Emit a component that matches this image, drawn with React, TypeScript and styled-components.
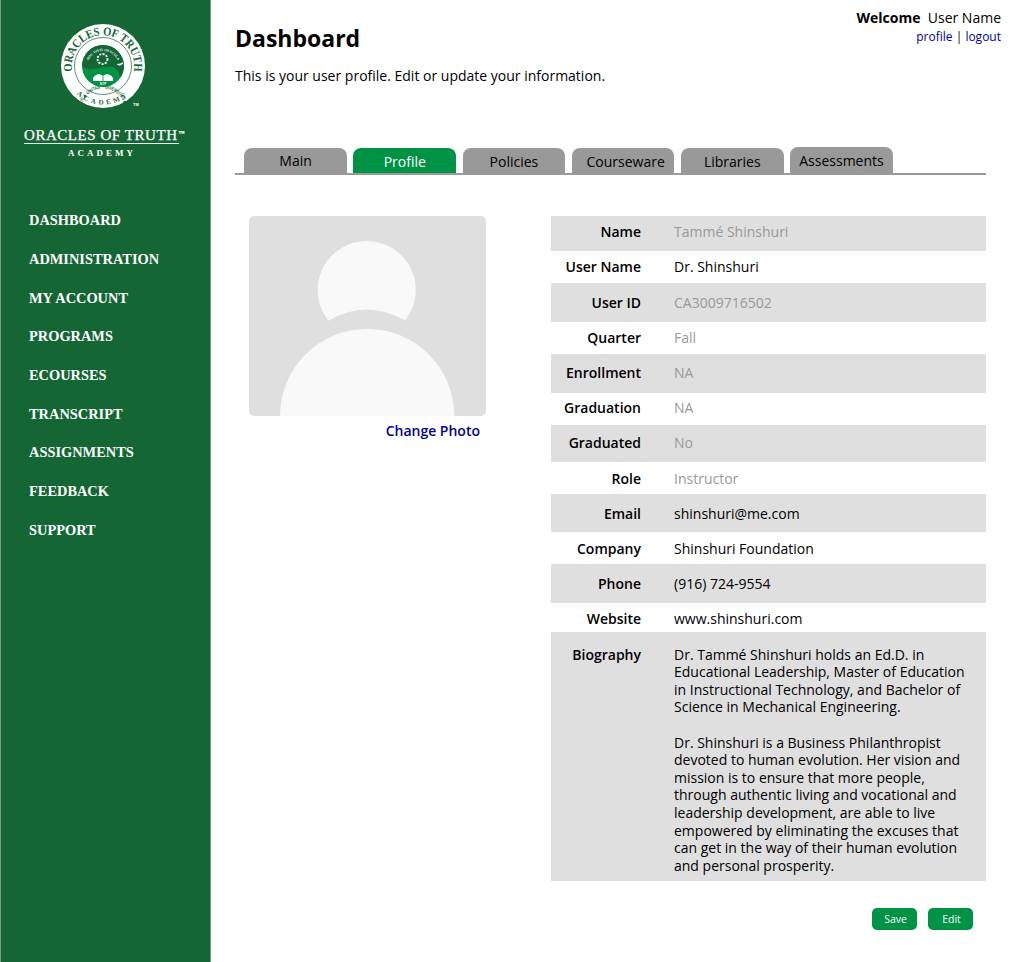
import React from "react";
import styled, { createGlobalStyle } from "styled-components";

const Global = createGlobalStyle`
  html, body { margin: 0; padding: 0; background: #fff; }
  body { font-family: "Open Sans", "Liberation Sans", sans-serif; color: #000; }
`;
const Page = styled.div`display: flex; width: 1024px; height: 962px; overflow: hidden;`;
const Sidebar = styled.aside`
  width: 211px; flex: none; box-sizing: border-box; background: #156635;
  border-left: 1px solid #6d9f80; border-right: 1px solid #6d9f80;
  display: flex; flex-direction: column; align-items: stretch;
`;
const Brand = styled.div`display: flex; flex-direction: column; align-items: flex-start; padding: 23px 0 0 23px;`;
const LogoSvg = styled.svg`display: block; width: 86px; height: 90px; margin-left: 36px;`;
const BrandName = styled.div`
  margin-top: 15px; font-family: "Liberation Serif", serif; font-size: 15px; letter-spacing: 0.55px;
  -webkit-text-stroke: 0.25px #fff;
  color: #fff; line-height: 15px; border-bottom: 1px solid #e8f0eb; white-space: nowrap;
  width: 155px;
`;
const Tm = styled.sup`font-size: 6px; line-height: 0; vertical-align: 5px; letter-spacing: 0; margin-left: 1px;`;
const BrandSub = styled.div`
  margin: 3px 0 0 44px; font-family: "Liberation Serif", serif; font-weight: 700; font-size: 9px; letter-spacing: 3px;
  color: #fff; line-height: 12px; white-space: nowrap;
`;
const Nav = styled.nav`display: flex; flex-direction: column; padding: 51.2px 0 0 28px;`;
const NavItem = styled.a`
  font-family: "Liberation Serif", serif; font-weight: 700; font-size: 14.4px; line-height: 20px; height: 38.7px;
  color: #fff; white-space: nowrap;
`;
const Main = styled.main`flex: 1; min-width: 0; display: flex; flex-direction: column; padding: 0 38px 0 24px;`;
const TopRow = styled.header`display: flex; justify-content: space-between; align-items: flex-start; height: 68px; margin-right: -15px;`;
const Title = styled.h1`margin: 22px 0 0; font-size: 23px; line-height: 32px; font-weight: 700;`;
const Account = styled.div`padding-top: 9px; text-align: right;`;
const Welcome = styled.div`font-size: 14px; line-height: 18px; white-space: pre;`;
const Strong = styled.b`font-weight: 700;`;
const AccountLinks = styled.div`font-size: 12px; line-height: 19px;`;
const Lnk = styled.a`color: #000099;`;
const Intro = styled.p`margin: 0; font-size: 14px; line-height: 15px;`;
const TabBar = styled.div`
  display: flex; align-items: flex-end; gap: 6.7px; margin-top: 63px; height: 27px; padding-left: 9.3px;
  border-bottom: 2px solid #999;
`;
const Tab = styled.div<{ $active?: boolean; $tall?: boolean; $line: number; $shift?: number }>`
  box-sizing: border-box; width: 102.5px; height: ${p => (p.$tall ? 26 : 24.7)}px; flex: none; white-space: nowrap;
  border-radius: 8px 8px 0 0; background: ${p => (p.$active ? "#009345" : "#999")};
  color: ${p => (p.$active ? "#fff" : "#000")}; font-size: 14px; text-align: center;
  line-height: ${p => p.$line}px; padding-left: ${p => p.$shift ?? 0}px;
`;
const Content = styled.section`display: flex; align-items: flex-start; margin-top: 41px;`;
const PhotoCol = styled.div`width: 316px; flex: none; padding-left: 14px; box-sizing: border-box;`;
const Photo = styled.svg`display: block; width: 237px; height: 200px;`;
const ChangeLink = styled.a`
  display: block; width: 231px; text-align: right; margin-top: 6px; font-size: 14px; line-height: 18px;
  font-weight: 600; color: #000099;
`;
const Table = styled.div`flex: 1; display: flex; flex-direction: column;`;
const Row = styled.div<{ $shade?: boolean; $h?: number; $pad?: number }>`
  display: grid; grid-template-columns: 90px 312px; column-gap: 33px; align-items: start; box-sizing: border-box;
  height: ${p => (p.$h ? `${p.$h}px` : "auto")}; padding-top: ${p => p.$pad ?? 0}px;
  background: ${p => (p.$shade ? "#dfdfdf" : "transparent")};
`;
const BioRow = styled(Row)`padding-top: 13.7px; padding-bottom: 6.3px;`;
const Label = styled.div`text-align: right; font-size: 14px; font-weight: 600; line-height: 18px; white-space: nowrap;`;
const Value = styled.div<{ $muted?: boolean }>`font-size: 14px; line-height: 18px; color: ${p => (p.$muted ? "#999" : "#000")};`;
const BioText = styled.div`font-size: 14px; line-height: 17.6px; width: 296px;`;
const BioGap = styled.div`height: 17.6px;`;
const Actions = styled.div`display: flex; justify-content: flex-end; gap: 11px; margin-top: 27px; padding-right: 13px;`;
const Btn = styled.button`
  width: 45px; height: 22px; border: 0; padding: 0 0 0 2px; border-radius: 5px; background: #009345; color: #fff;
  font-family: inherit; font-size: 10.5px; line-height: 22px;
`;

const rows: { l: string; v: string; muted: boolean; h: number; pad: number }[] = [
  { l: "Name", v: "Tammé Shinshuri", muted: true, h: 35, pad: 7 },
  { l: "User Name", v: "Dr. Shinshuri", muted: false, h: 32, pad: 7 },
  { l: "User ID", v: "CA3009716502", muted: true, h: 39, pad: 11 },
  { l: "Quarter", v: "Fall", muted: true, h: 32, pad: 7 },
  { l: "Enrollment", v: "NA", muted: true, h: 39, pad: 10 },
  { l: "Graduation", v: "NA", muted: true, h: 32, pad: 6 },
  { l: "Graduated", v: "No", muted: true, h: 37, pad: 9 },
  { l: "Role", v: "Instructor", muted: true, h: 32, pad: 8 },
  { l: "Email", v: "shinshuri@me.com", muted: false, h: 38, pad: 11 },
  { l: "Company", v: "Shinshuri Foundation", muted: false, h: 32, pad: 8 },
  { l: "Phone", v: "(916) 724-9554", muted: false, h: 39, pad: 11 },
  { l: "Website", v: "www.shinshuri.com", muted: false, h: 29, pad: 7 },
];
const navItems = ["DASHBOARD", "ADMINISTRATION", "MY ACCOUNT", "PROGRAMS", "ECOURSES", "TRANSCRIPT", "ASSIGNMENTS", "FEEDBACK", "SUPPORT"];
const tabs: { t: string; line: number; shift?: number }[] = [
  { t: "Main", line: 26 },
  { t: "Profile", line: 27 },
  { t: "Policies", line: 27 },
  { t: "Courseware", line: 27, shift: 5 },
  { t: "Libraries", line: 27 },
  { t: "Assessments", line: 27 },
];

const Logo = () => (
  <LogoSvg viewBox="0 0 86 90" aria-hidden="true">
    <defs>
      <path id="arcTop" d="M12.500 50a31.200 31.200 0 1 1 61 0" />
      <path id="arcBot" d="M10 63a38.600 38.600 0 0 0 66 0" />
      <path id="ring" d="M43 65.500a22.500 22.500 0 1 1-0.010 0" />
      <path id="discTop" d="M27 44a16 16 0 0 1 32 0" />
    </defs>
    <circle cx="43" cy="43" r="42" fill="#fff" />
    <circle cx="43" cy="43" r="28.500" fill="none" stroke="#156635" strokeWidth="0.700" />
    <circle cx="43" cy="43" r="21" fill="#009345" />
    <path d="M22 43a21 21 0 0 1 42 0c0 5-2 9-4 12 0-9-7-13-15-11-9 2-18 4-23-1z" fill="#156635" />
    <path d="M63.500 39a4 4 0 0 1-7 2 12 12 0 0 0 7-2z" fill="#fff" />
    <circle cx="42.500" cy="36" r="5" fill="none" stroke="#fff" strokeWidth="1.800" strokeDasharray="2 1.300" />
    <path d="M33 55c2-4 7-5 10-2 3-3 8-2 10 2v3H33z" fill="#fff" />
    <path d="M43 53v5" stroke="#009345" strokeWidth="0.800" />
    <text fontFamily="Liberation Serif, serif" fontWeight="700" fontSize="12" fill="#156635">
      <textPath href="#arcTop" startOffset="50%" textAnchor="middle" textLength="108" lengthAdjust="spacingAndGlyphs">ORACLES OF TRUTH</textPath>
    </text>
    <text fontFamily="Liberation Serif, serif" fontWeight="700" fontSize="7" fill="#156635" letterSpacing="3">
      <textPath href="#arcBot" startOffset="50%" textAnchor="middle">ACADEMY</textPath>
    </text>
    <text fontFamily="Liberation Sans, sans-serif" fontWeight="700" fontSize="4.800" fill="#156635">
      <textPath href="#ring" startOffset="2" textLength="136" lengthAdjust="spacingAndGlyphs">DIVERSITAS ◆ PERSONALIS • ET GLOBALIS • TRANSFORMATIO ◆ UNITAS</textPath>
    </text>
    <text fontFamily="Liberation Serif, serif" fontWeight="700" fontSize="3.400" fill="#fff">
      <textPath href="#discTop" startOffset="50%" textAnchor="middle">HOC VIVIT ORACULA</textPath>
    </text>
    <text x="43" y="62" textAnchor="middle" fontFamily="Liberation Sans, sans-serif" fontWeight="700" fontSize="3" fill="#fff">SOP</text>
    <text x="73" y="83" fontFamily="Liberation Sans, sans-serif" fontWeight="700" fontSize="4" fill="#fff">TM</text>
  </LogoSvg>
);

export default function App() {
  return (
    <Page>
      <Global />
      <Sidebar>
        <Brand>
          <Logo />
          <BrandName>ORACLES OF TRUTH<Tm>™</Tm></BrandName>
          <BrandSub>ACADEMY</BrandSub>
        </Brand>
        <Nav>
          {navItems.map(n => <NavItem key={n}>{n}</NavItem>)}
        </Nav>
      </Sidebar>
      <Main>
        <TopRow>
          <Title>Dashboard</Title>
          <Account>
            <Welcome><Strong>Welcome</Strong>  User Name</Welcome>
            <AccountLinks><Lnk>profile</Lnk> | <Lnk>logout</Lnk></AccountLinks>
          </Account>
        </TopRow>
        <Intro>This is your user profile. Edit or update your information.</Intro>
        <TabBar>
          {tabs.map(({ t, line, shift }) => (
            <Tab key={t} $line={line} $shift={shift} $active={t === "Profile"} $tall={t === "Assessments"}>{t}</Tab>
          ))}
        </TabBar>
        <Content>
          <PhotoCol>
            <Photo viewBox="0 0 237 200" aria-hidden="true">
              <rect width="237" height="200" rx="5" fill="#dfdfdf" />
              <circle cx="117.700" cy="74" r="49" fill="#f9f9f9" />
              <path d="M79 105Q118 82 157 105L170 130H66z" fill="#dfdfdf" />
              <path d="M31 200a87 87 0 0 1 174.300 0z" fill="#f9f9f9" />
            </Photo>
            <ChangeLink>Change Photo</ChangeLink>
          </PhotoCol>
          <Table>
            {rows.map((r, i) => (
              <Row key={r.l} $h={r.h} $pad={r.pad} $shade={i % 2 === 0}>
                <Label>{r.l}</Label>
                <Value $muted={r.muted}>{r.v}</Value>
              </Row>
            ))}
            <BioRow $shade>
              <Label>Biography</Label>
              <BioText>
                Dr. Tammé Shinshuri holds an Ed.D. in Educational Leadership, Master of Education in Instructional Technology, and Bachelor of Science in Mechanical Engineering.
                <BioGap />
                Dr. Shinshuri is a Business Philanthropist devoted to human evolution. Her vision and mission is to ensure that more people, through authentic living and vocational and leadership development, are able to live empowered by eliminating the excuses that can get in the way of their human evolution and personal prosperity.
              </BioText>
            </BioRow>
            <Actions>
              <Btn>Save</Btn>
              <Btn>Edit</Btn>
            </Actions>
          </Table>
        </Content>
      </Main>
    </Page>
  );
}
